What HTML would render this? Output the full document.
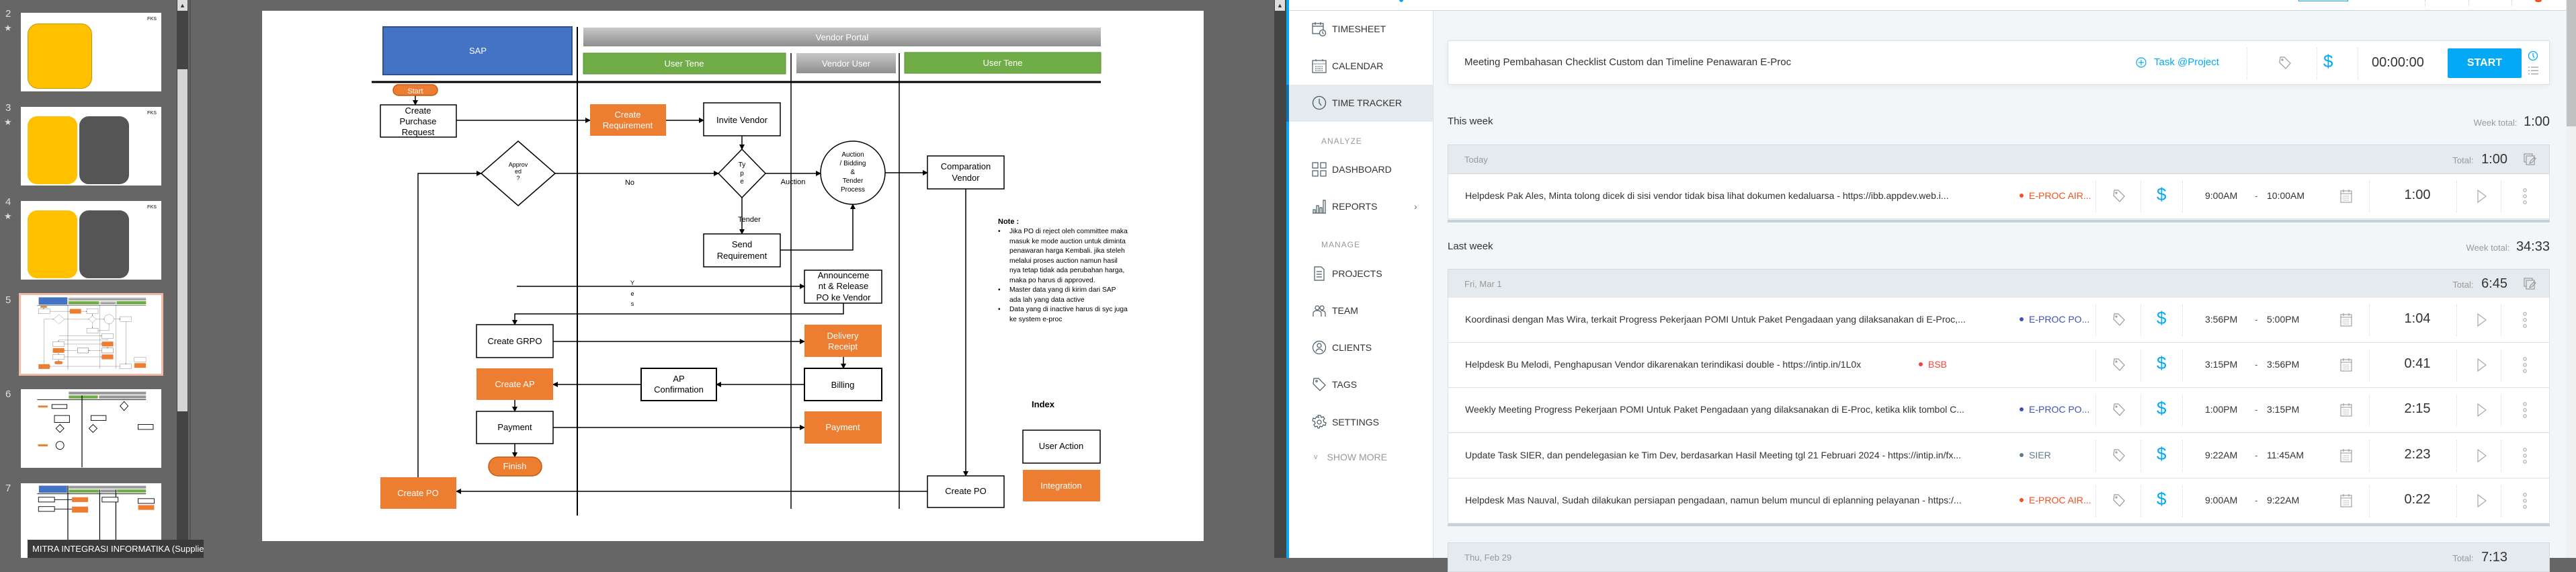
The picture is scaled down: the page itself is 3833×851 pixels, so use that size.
<!DOCTYPE html>
<html><head><meta charset="utf-8">
<style>
*{margin:0;padding:0;box-sizing:border-box}
body{width:3833px;height:830px;position:relative;overflow:hidden;background:#666;font-family:"Liberation Sans",sans-serif}
.a{position:absolute}
.thumb{position:absolute;left:31px;width:209px;background:#fff}
.num{position:absolute;left:8px;color:#ddd;font-size:15px}
.star{position:absolute;left:6px;color:#ddd;font-size:13px}
.side{position:absolute;left:1952px;font-size:14px;color:#333;display:flex;align-items:center}
.side svg{margin-right:8px}
.sec{position:absolute;left:1966px;font-size:12px;color:#999;letter-spacing:1px}
.card{position:absolute;left:2154px;width:1640px;background:#fff;border:1px solid #dbe2e7}
.hdr{position:absolute;left:2154px;width:1640px;height:44px;background:#e4eaee;border:1px solid #d3dbe0}
.hdr .d{position:absolute;left:24px;top:14px;font-size:13px;color:#999}
.hdr .t{position:absolute;right:62px;top:10px;font-size:13px;color:#999}
.hdr .t b{font-weight:normal;font-size:20px;color:#333;margin-left:8px}
.row{position:absolute;left:2154px;width:1640px;height:67px;background:#fff;border-left:1px solid #dbe2e7;border-right:1px solid #dbe2e7;border-bottom:1px solid #dbe2e7}
.row .desc{position:absolute;left:25px;top:24px;font-size:14px;color:#333;white-space:nowrap}
.row .proj{position:absolute;top:24px;font-size:14px;white-space:nowrap}
.row .proj:before{content:"";display:inline-block;width:6px;height:6px;border-radius:3px;background:currentColor;margin-right:8px;vertical-align:2px}
.dv{position:absolute;top:10px;height:47px;border-left:1px dotted #cfd8dc}
.row .tm{position:absolute;top:24px;font-size:14px;color:#333}
.row .dur{position:absolute;left:1412px;width:60px;text-align:center;top:20px;font-size:20px;color:#333}
.buck{position:absolute;left:2154px;width:1640px;height:4px;background:#c6d2d9}
</style></head><body>

<!-- left panel -->
<div class="a" style="left:0;top:0;width:262px;height:830px;background:#666"></div>
<div class="a" style="left:263px;top:0;width:17px;height:830px;background:#444"></div>
<div class="a" style="left:264px;top:0;width:15px;height:16px;background:#ddd;color:#333;font-size:9px;text-align:center;line-height:16px">▲</div>
<div class="a" style="left:264px;top:103px;width:15px;height:509px;background:#d4d4d4"></div>
<div class="a" style="left:282px;top:0;width:2px;height:830px;background:#555"></div>

<div class="num" style="top:12px">2</div><div class="star" style="top:34px">★</div>
<div class="thumb" style="top:19px;height:117px">
 <div class="a" style="left:10px;top:16px;width:96px;height:97px;background:#ffc000;border:1px solid #c89700;border-radius:16px"></div>
 <div class="a" style="left:188px;top:6px;font-size:7px;font-weight:bold;color:#555">FKS</div>
</div>
<div class="num" style="top:152px">3</div><div class="star" style="top:174px">★</div>
<div class="thumb" style="top:159px;height:117px">
 <div class="a" style="left:10px;top:14px;width:74px;height:101px;background:#ffc000;border-radius:14px"></div>
 <div class="a" style="left:87px;top:14px;width:74px;height:101px;background:#555;border-radius:14px"></div>
 <div class="a" style="left:188px;top:6px;font-size:7px;font-weight:bold;color:#555">FKS</div>
</div>
<div class="num" style="top:292px">4</div><div class="star" style="top:314px">★</div>
<div class="thumb" style="top:299px;height:117px">
 <div class="a" style="left:10px;top:14px;width:74px;height:101px;background:#ffc000;border-radius:14px"></div>
 <div class="a" style="left:87px;top:14px;width:74px;height:101px;background:#555;border-radius:14px"></div>
 <div class="a" style="left:188px;top:6px;font-size:7px;font-weight:bold;color:#555">FKS</div>
</div>
<div class="num" style="top:438px">5</div>
<div class="a" style="left:28px;top:436px;width:215px;height:123px;background:#f4b9a6"></div>
<div class="thumb" style="top:439px;height:117px"></div>
<div class="num" style="top:578px">6</div>
<div class="thumb" style="top:579px;height:117px"></div>
<div class="num" style="top:718px">7</div>
<div class="thumb" style="top:719px;height:111px"></div>

<!-- slide -->
<div class="a" style="left:390px;top:16px;width:1401px;height:789px;background:#fff"></div>
<div class="a" style="left:1896px;top:0;width:18px;height:830px;background:#444"></div>
<div class="a" style="left:1897px;top:0;width:15px;height:16px;background:#ddd;color:#333;font-size:9px;text-align:center;line-height:16px">▲</div>

<svg class="a" style="left:0;top:0" width="1900" height="830" viewBox="0 0 1900 830">
<defs>
<marker id="ar" markerWidth="8" markerHeight="8" refX="7" refY="4" orient="auto" markerUnits="userSpaceOnUse"><path d="M0,0 L8,4 L0,8z" fill="#000"/></marker>
<linearGradient id="gg" x1="0" y1="0" x2="0" y2="1"><stop offset="0" stop-color="#c8c8c8"/><stop offset="1" stop-color="#8e8e8e"/></linearGradient>
</defs>
<g id="shp">
<rect x="570" y="40" width="281" height="71" fill="#4472c4" stroke="#2f528f" stroke-width="2"/>
<rect x="868" y="41" width="770" height="28" fill="url(#gg)"/>
<rect x="868" y="79" width="301" height="31" fill="#70ad47" stroke="#5a8f38"/>
<rect x="1185" y="79" width="148" height="30" fill="url(#gg)"/>
<rect x="1346" y="78" width="292" height="31" fill="#70ad47" stroke="#5a8f38"/>
<line x1="553" y1="122" x2="1638" y2="122" stroke="#000" stroke-width="3"/>
<line x1="859" y1="40" x2="859" y2="767" stroke="#000" stroke-width="2"/>
<line x1="1177" y1="79" x2="1177" y2="757" stroke="#000" stroke-width="1.5"/>
<line x1="1338" y1="79" x2="1338" y2="757" stroke="#000" stroke-width="1.5"/>
<g fill="none" stroke="#000" stroke-width="1.5">
<path d="M618,142 V156" marker-end="url(#ar)"/>
<path d="M679,179 H878" marker-end="url(#ar)"/>
<path d="M991,179 H1047" marker-end="url(#ar)"/>
<path d="M1104,202 V222" marker-end="url(#ar)"/>
<path d="M622,710 V258 H716" marker-end="url(#ar)"/>
<path d="M826,258 H1069" marker-end="url(#ar)"/>
<path d="M1139,258 H1221" marker-end="url(#ar)"/>
<path d="M1317,257 H1380" marker-end="url(#ar)"/>
<path d="M1104,294 V348" marker-end="url(#ar)"/>
<path d="M1161,372 H1269 V304" marker-end="url(#ar)"/>
<path d="M769,426 H1197" marker-end="url(#ar)"/>
<path d="M1255,451 V467 H766 V483" marker-end="url(#ar)"/>
<path d="M823,508 H1197" marker-end="url(#ar)"/>
<path d="M1255,531 V548" marker-end="url(#ar)"/>
<path d="M1197,572 H1066" marker-end="url(#ar)"/>
<path d="M954,572 H823" marker-end="url(#ar)"/>
<path d="M766,595 V612" marker-end="url(#ar)"/>
<path d="M823,636 H1197" marker-end="url(#ar)"/>
<path d="M766,660 V680" marker-end="url(#ar)"/>
<path d="M1437,281 V708" marker-end="url(#ar)"/>
<path d="M1380,731 H679" marker-end="url(#ar)"/>
</g>
<g stroke="#000" stroke-width="1.5" fill="#fff">
<rect x="585" y="126" width="66" height="16" rx="8" fill="#ed7d31" stroke="#c55a11"/>
<rect x="566" y="156" width="113" height="48"/>
<rect x="878" y="155" width="113" height="47" fill="#ed7d31" stroke="none"/>
<rect x="1047" y="153" width="114" height="49"/>
<polygon points="771,210 826,258 771,306 716,258"/>
<polygon points="1104,222 1139,258 1104,294 1069,258"/>
<ellipse cx="1269" cy="257" rx="48" ry="47"/>
<rect x="1380" y="232" width="114" height="49"/>
<rect x="1047" y="348" width="114" height="49"/>
<rect x="1197" y="402" width="115" height="49"/>
<rect x="709" y="483" width="114" height="49"/>
<rect x="1197" y="483" width="115" height="48" fill="#ed7d31" stroke="none"/>
<rect x="709" y="548" width="114" height="47" fill="#ed7d31" stroke="none"/>
<rect x="954" y="548" width="112" height="48" stroke-width="2"/>
<rect x="1197" y="548" width="115" height="48" stroke-width="2"/>
<rect x="709" y="612" width="114" height="48"/>
<rect x="1197" y="612" width="115" height="48" fill="#ed7d31" stroke="none"/>
<rect x="727" y="680" width="79" height="28" rx="14" fill="#ed7d31" stroke="#c55a11"/>
<rect x="566" y="710" width="113" height="47" fill="#ed7d31" stroke="none"/>
<rect x="1380" y="708" width="114" height="47"/>
<rect x="1522" y="640" width="115" height="49"/>
<rect x="1522" y="699" width="115" height="47" fill="#ed7d31" stroke="none"/>
</g>
</g>
<g font-family="'Liberation Sans Narrow','Liberation Sans',sans-serif" font-size="13" text-anchor="middle" fill="#000">
<g fill="#fff"><text x="711" y="80">SAP</text><text x="1253" y="60">Vendor Portal</text><text x="1018" y="99">User Tene</text><text x="1259" y="99">Vendor User</text><text x="1492" y="98">User Tene</text>
<text x="618" y="139" font-size="11">Start</text><text x="934" y="175">Create</text><text x="934" y="191">Requirement</text>
<text x="1254" y="504">Delivery</text><text x="1254" y="520">Receipt</text><text x="766" y="576">Create AP</text><text x="1254" y="640">Payment</text>
<text x="766" y="698">Finish</text><text x="622" y="738">Create PO</text><text x="1579" y="727">Integration</text></g>
<text x="622" y="169">Create</text><text x="622" y="185">Purchase</text><text x="622" y="201">Request</text>
<text x="1104" y="183">Invite Vendor</text>
<text x="771" y="248" font-size="9">Approv</text><text x="771" y="258" font-size="9">ed</text><text x="771" y="268" font-size="9">?</text>
<text x="1104" y="248" font-size="10">Ty</text><text x="1104" y="261" font-size="10">p</text><text x="1104" y="273" font-size="10">e</text>
<text x="1269" y="233" font-size="10">Auction</text><text x="1269" y="246" font-size="10">/ Bidding</text><text x="1269" y="259" font-size="10">&amp;</text><text x="1269" y="272" font-size="10">Tender</text><text x="1269" y="285" font-size="10">Process</text>
<text x="1437" y="252">Comparation</text><text x="1437" y="269">Vendor</text>
<text x="937" y="275" font-size="11">No</text><text x="1180" y="274" font-size="11">Auction</text><text x="1115" y="330" font-size="11">Tender</text>
<text x="1104" y="368">Send</text><text x="1104" y="385">Requirement</text>
<text x="1255" y="414">Announceme</text><text x="1255" y="430">nt &amp; Release</text><text x="1255" y="447">PO ke Vendor</text>
<text x="941" y="424" font-size="9">Y</text><text x="941" y="440" font-size="9">e</text><text x="941" y="455" font-size="9">s</text>
<text x="766" y="512">Create GRPO</text>
<text x="1010" y="568">AP</text><text x="1010" y="584">Confirmation</text>
<text x="1254" y="577">Billing</text><text x="766" y="640">Payment</text><text x="1437" y="735">Create PO</text>
<text x="1579" y="668">User Action</text>
<text x="1552" y="606" font-weight="bold">Index</text>
</g>
<g font-family="'Liberation Sans',sans-serif" font-size="10.3" fill="#000">
<text x="1485" y="333" font-weight="bold" font-size="11">Note :</text>
<text x="1485" y="347">•</text><text x="1502" y="347">Jika PO di reject oleh committee maka</text>
<text x="1502" y="362">masuk ke mode auction untuk diminta</text>
<text x="1502" y="376">penawaran harga Kembali. jika steleh</text>
<text x="1502" y="391">melalui proses auction namun hasil</text>
<text x="1502" y="405">nya tetap tidak ada perubahan harga,</text>
<text x="1502" y="420">maka po harus di approved.</text>
<text x="1485" y="434">•</text><text x="1502" y="434">Master data yang di kirim dari SAP</text>
<text x="1502" y="449">ada lah yang data active</text>
<text x="1485" y="463">•</text><text x="1502" y="463">Data yang di inactive harus di syc juga</text>
<text x="1502" y="478">ke system e-proc</text>
</g>
<!-- thumbnails -->
<use href="#shp" transform="translate(31,439) scale(0.1492,0.1483) translate(-390,-16)"/>
<g transform="translate(31,719) scale(0.1492,0.1483) translate(-390,-16)">
<rect x="570" y="40" width="281" height="71" fill="#4472c4"/><rect x="868" y="41" width="770" height="28" fill="#999"/>
<rect x="868" y="79" width="301" height="31" fill="#70ad47"/><rect x="1185" y="79" width="148" height="30" fill="#999"/><rect x="1346" y="78" width="292" height="31" fill="#70ad47"/>
<line x1="553" y1="122" x2="1638" y2="122" stroke="#000" stroke-width="6"/>
<g stroke="#000" stroke-width="8"><line x1="859" y1="40" x2="859" y2="800"/><line x1="1177" y1="79" x2="1177" y2="800"/><line x1="1338" y1="79" x2="1338" y2="800"/></g>
<g fill="#fff" stroke="#000" stroke-width="6"><rect x="566" y="156" width="160" height="48"/><rect x="566" y="250" width="160" height="48"/><rect x="1200" y="156" width="160" height="48"/><rect x="1560" y="170" width="160" height="48"/></g>
<rect x="900" y="156" width="160" height="48" fill="#ed7d31"/><rect x="900" y="250" width="160" height="60" fill="#ed7d31"/><rect x="1560" y="235" width="160" height="48" fill="#ed7d31"/>
<g stroke="#000" stroke-width="6"><line x1="726" y1="180" x2="900" y2="180"/><line x1="726" y1="274" x2="900" y2="274"/></g>
</g>
<g transform="translate(31,579) scale(0.1492,0.1483) translate(-390,-16)">
<rect x="868" y="41" width="770" height="28" fill="#999"/><rect x="868" y="79" width="290" height="31" fill="#70ad47"/><rect x="1170" y="79" width="468" height="31" fill="#999"/>
<line x1="553" y1="122" x2="1638" y2="122" stroke="#000" stroke-width="6"/>
<line x1="1000" y1="79" x2="1000" y2="800" stroke="#000" stroke-width="8"/>
<g fill="#fff" stroke="#000" stroke-width="6"><rect x="700" y="170" width="150" height="40"/><rect x="725" y="280" width="150" height="70"/><rect x="1090" y="280" width="150" height="50"/><rect x="1560" y="370" width="150" height="50"/>
<polygon points="1420,140 1460,185 1420,230 1380,185"/><polygon points="780,370 820,410 780,450 740,410"/><polygon points="1110,370 1150,410 1110,450 1070,410"/><ellipse cx="780" cy="580" rx="40" ry="40"/></g>
<rect x="560" y="180" width="100" height="20" rx="10" fill="#ed7d31"/><rect x="560" y="570" width="100" height="20" rx="10" fill="#ed7d31"/>
</g>
</svg>
<div class="a" style="left:41px;top:803px;width:262px;height:27px;background:#3a3a3a;color:#fff;font-size:13px;line-height:27px;padding-left:7px;white-space:nowrap;overflow:hidden">MITRA INTEGRASI INFORMATIKA (Supplier)</div>

<!-- right app -->
<div class="a" style="left:1914px;top:0;width:1904px;height:830px;background:#f2f6f8"></div>
<div class="a" style="left:1914px;top:0;width:1904px;height:16px;background:#fff;border-bottom:1px solid #c8d4dc"></div>
<div class="a" style="left:2082px;top:0;width:6px;height:3px;background:#03a9f4;border-radius:0 0 3px 3px"></div>
<div class="a" style="left:3420px;top:0;width:74px;height:2px;border:1px solid #03a9f4;border-top:none"></div>
<div class="a" style="left:3608px;top:0;height:10px;border-left:1px dotted #ccc"></div>
<div class="a" style="left:3673px;top:0;height:10px;border-left:1px dotted #ccc"></div>
<div class="a" style="left:3737px;top:0;height:10px;border-left:1px dotted #ccc"></div>
<div class="a" style="left:3772px;top:0;width:10px;height:3px;background:#f4511e;border-radius:0 0 5px 5px"></div>
<div class="a" style="left:1914px;top:0;width:4px;height:830px;background:#03a9f4"></div>
<div class="a" style="left:1918px;top:16px;width:215px;height:814px;background:#fff;border-right:1px solid #dbe2e7"></div>
<div class="a" style="left:1918px;top:126px;width:214px;height:55px;background:#e4eaee"></div>
<div class="a" style="left:1914px;top:126px;width:4px;height:55px;background:#0b75b5"></div>
<div class="a" style="left:3818px;top:0;width:15px;height:830px;background:#f0f0f0"></div>
<div class="a" style="left:3819px;top:0;width:14px;height:188px;background:#c1c1c1"></div>

<div class="side" style="top:32px"><svg width="22" height="22" viewBox="0 0 22 22" fill="none" stroke="#455a64" stroke-width="1.2"><rect x="1" y="3" width="16" height="15"/><path d="M1 7h16M5 1v4M13 1v4"/><circle cx="16" cy="17" r="4.5" fill="#fff"/><path d="M16 14.5v2.5l1.5 1.5"/></svg>TIMESHEET</div>
<div class="side" style="top:87px"><svg width="22" height="22" viewBox="0 0 22 22" fill="none" stroke="#455a64" stroke-width="1.2"><rect x="1" y="3" width="20" height="18"/><path d="M1 8h20M6 1v4M16 1v4M5 12h12M5 15h12M5 18h12" stroke-dasharray="1 1"/></svg>CALENDAR</div>
<div class="side" style="top:142px"><svg width="22" height="22" viewBox="0 0 22 22" fill="none" stroke="#455a64" stroke-width="1.3"><circle cx="11" cy="11" r="9.5"/><path d="M11 5v6l3 4"/></svg>TIME TRACKER</div>
<div class="sec" style="top:203px">ANALYZE</div>
<div class="side" style="top:241px"><svg width="22" height="22" viewBox="0 0 22 22" fill="none" stroke="#455a64" stroke-width="1.2"><rect x="1" y="1" width="8" height="8"/><rect x="13" y="1" width="8" height="8"/><rect x="1" y="13" width="8" height="8"/><rect x="13" y="13" width="8" height="8"/></svg>DASHBOARD</div>
<div class="side" style="top:296px"><svg width="22" height="22" viewBox="0 0 22 22" fill="none" stroke="#455a64" stroke-width="1.2"><path d="M2 21v-5h3v5M7 21V10h3v11M12 21V13h3v8M17 21V2h3v19M1 21h20"/></svg>REPORTS<span style="position:absolute;left:152px;color:#666">›</span></div>
<div class="sec" style="top:357px">MANAGE</div>
<div class="side" style="top:396px"><svg width="22" height="22" viewBox="0 0 22 22" fill="none" stroke="#455a64" stroke-width="1.2"><path d="M4 1h10l4 4v16H4z M7 8h8M7 12h8M7 16h8"/></svg>PROJECTS</div>
<div class="side" style="top:451px"><svg width="22" height="22" viewBox="0 0 22 22" fill="none" stroke="#455a64" stroke-width="1.2"><circle cx="8" cy="7" r="3"/><circle cx="15" cy="7" r="3"/><path d="M2 20v-5c0-2 2-4 6-4s6 2 6 4v5M14 11c4 0 6 2 6 4v5"/></svg>TEAM</div>
<div class="side" style="top:506px"><svg width="22" height="22" viewBox="0 0 22 22" fill="none" stroke="#455a64" stroke-width="1.2"><circle cx="11" cy="11" r="9.5"/><circle cx="11" cy="8" r="3"/><path d="M6 17c1-3 3-4 5-4s4 1 5 4"/></svg>CLIENTS</div>
<div class="side" style="top:561px"><svg width="22" height="22" viewBox="0 0 22 22" fill="none" stroke="#455a64" stroke-width="1.2"><path d="M3 2h7l10 10-8 8L2 10z"/><circle cx="7" cy="6" r="1.2"/></svg>TAGS</div>
<div class="side" style="top:617px"><svg width="22" height="22" viewBox="0 0 22 22" fill="none" stroke="#455a64" stroke-width="1.2"><circle cx="11" cy="11" r="3"/><path d="M9 1h4l1 3 3-1 2 3-2 2 1 3 3 1v0l-1 4-3-1-2 3-3-1-1 3H9l-1-3-3 1-2-3 2-2-1-3-3-1 1-4 3 1 2-3 3 1z"/></svg>SETTINGS</div>
<div class="side" style="top:672px;color:#999;left:1955px"><span style="font-size:11px;margin-right:14px">v</span>SHOW MORE</div>

<!-- timer card -->
<div class="card" style="top:60px;height:66px;box-shadow:0 2px 8px rgba(0,0,0,.06)">
 <div class="a" style="left:24px;top:23px;font-size:15px;color:#333">Meeting Pembahasan Checklist Custom dan Timeline Penawaran E-Proc</div>
 <div class="a" style="left:1022px;top:22px;font-size:15px;color:#03a9f4;display:flex;align-items:center"><svg width="18" height="18" viewBox="0 0 18 18" fill="none" stroke="#03a9f4" stroke-width="1.2"><circle cx="9" cy="10" r="7"/><path d="M9 6v8M5 10h8"/></svg><span style="margin-left:10px">Task @Project</span></div>
 <div class="dv" style="left:1188px"></div>
 <svg class="a" style="left:1235px;top:22px" width="20" height="22" viewBox="0 0 20 22" fill="none" stroke="#999" stroke-width="1.2"><path d="M3 2h6l9 9-7 8L2 10z"/><circle cx="6" cy="6" r="1"/></svg>
 <div class="dv" style="left:1292px"></div>
 <div class="a" style="left:1302px;top:15px;font-size:26px;color:#03a9f4">$</div>
 <div class="dv" style="left:1353px"></div>
 <div class="a" style="left:1374px;top:21px;font-size:20px;color:#333">00:00:00</div>
 <div class="a" style="left:1487px;top:11px;width:110px;height:44px;background:#03a9f4;border-radius:2px;color:#fff;font-size:16px;font-weight:bold;text-align:center;line-height:44px">START</div>
 <svg class="a" style="left:1606px;top:14px" width="16" height="16" viewBox="0 0 16 16" fill="none" stroke="#03a9f4" stroke-width="1.3"><circle cx="8" cy="8" r="6.5"/><path d="M8 4v4l2 3"/></svg>
 <svg class="a" style="left:1607px;top:38px" width="15" height="12" viewBox="0 0 15 12" stroke="#999" stroke-width="1.2"><path d="M0 1h2M4 1h11M0 6h2M4 6h11M0 11h2M4 11h11"/></svg>
</div>

<div class="a" style="left:2154px;top:172px;font-size:15px;color:#333">This week</div>
<div class="a" style="left:3620px;top:170px;width:174px;text-align:right;font-size:13px;color:#999">Week total: <span style="font-size:20px;color:#333;margin-left:6px">1:00</span></div>
<div class="hdr" style="top:215px"><div class="d">Today</div><div class="t">Total: <b>1:00</b></div><svg class="a" style="right:18px;top:12px" width="20" height="20" viewBox="0 0 20 20" fill="none" stroke="#999" stroke-width="1.2"><rect x="1" y="1" width="12" height="12"/><rect x="4" y="4" width="12" height="13" fill="#e4eaee"/><path d="M9 15l1-3 6-6 2 2-6 6z"/></svg></div>

<div class="a" style="left:2154px;top:358px;font-size:15px;color:#333">Last week</div>
<div class="a" style="left:3600px;top:356px;width:194px;text-align:right;font-size:13px;color:#999">Week total: <span style="font-size:20px;color:#333;margin-left:6px">34:33</span></div>
<div class="hdr" style="top:400px"><div class="d">Fri, Mar 1</div><div class="t">Total: <b>6:45</b></div><svg class="a" style="right:18px;top:12px" width="20" height="20" viewBox="0 0 20 20" fill="none" stroke="#999" stroke-width="1.2"><rect x="1" y="1" width="12" height="12"/><rect x="4" y="4" width="12" height="13" fill="#e4eaee"/><path d="M9 15l1-3 6-6 2 2-6 6z"/></svg></div>
<div class="hdr" style="top:807px"><div class="d">Thu, Feb 29</div><div class="t">Total: <b>7:13</b></div></div>

<div id="rows"></div>
<script>
var rows=[
[259,"Helpdesk Pak Ales, Minta tolong dicek di sisi vendor tidak bisa lihat dokumen kedaluarsa - https://ibb.appdev.web.i...","E-PROC AIR...","#f4511e",850,"9:00AM","10:00AM","1:00"],
[443,"Koordinasi dengan Mas Wira, terkait Progress Pekerjaan POMI Untuk Paket Pengadaan yang dilaksanakan di E-Proc,...","E-PROC PO...","#3f51b5",850,"3:56PM","5:00PM","1:04"],
[510,"Helpdesk Bu Melodi, Penghapusan Vendor dikarenakan terindikasi double - https://intip.in/1L0x","BSB","#f44336",700,"3:15PM","3:56PM","0:41"],
[577,"Weekly Meeting Progress Pekerjaan POMI Untuk Paket Pengadaan yang dilaksanakan di E-Proc, ketika klik tombol C...","E-PROC PO...","#3f51b5",850,"1:00PM","3:15PM","2:15"],
[645,"Update Task SIER, dan pendelegasian ke Tim Dev, berdasarkan Hasil Meeting tgl 21 Februari 2024 - https://intip.in/fx...","SIER","#607d8b",850,"9:22AM","11:45AM","2:23"],
[712,"Helpdesk Mas Nauval, Sudah dilakukan persiapan pengadaan, namun belum muncul di eplanning pelayanan - https:/...","E-PROC AIR...","#f4511e",850,"9:00AM","9:22AM","0:22"]];
var h="";
rows.forEach(function(r){
h+='<div class="row" style="top:'+r[0]+'px"><div class="desc">'+r[1]+'</div>'+
'<div class="proj" style="left:'+r[4]+'px;color:'+r[3]+'">'+r[2]+'</div>'+
'<div class="dv" style="left:963px"></div>'+
'<svg class="a" style="left:988px;top:22px" width="20" height="22" viewBox="0 0 20 22" fill="none" stroke="#999" stroke-width="1.2"><path d="M3 2h6l9 9-7 8L2 10z"/><circle cx="6" cy="6" r="1"/></svg>'+
'<div class="dv" style="left:1030px"></div>'+
'<div class="a" style="left:1054px;top:15px;font-size:26px;color:#03a9f4">$</div>'+
'<div class="dv" style="left:1092px"></div>'+
'<div class="tm" style="left:1126px">'+r[5]+'</div><div class="tm" style="left:1200px;color:#666">-</div><div class="tm" style="left:1218px">'+r[6]+'</div>'+
'<svg class="a" style="left:1327px;top:22px" width="18" height="22" viewBox="0 0 18 22" fill="none" stroke="#999" stroke-width="1.1"><rect x="1" y="3" width="16" height="17"/><path d="M1 7h16M5 1v4M13 1v4"/><path d="M4 11h10M4 14h10M4 17h10" stroke-dasharray="1 1"/></svg>'+
'<div class="dv" style="left:1370px"></div>'+
'<div class="dur">'+r[7]+'</div>'+
'<div class="dv" style="left:1500px"></div>'+
'<svg class="a" style="left:1530px;top:22px" width="16" height="22" viewBox="0 0 16 22" fill="none" stroke="#aaa" stroke-width="1.2"><path d="M2 2l12 9-12 9z"/></svg>'+
'<div class="dv" style="left:1566px"></div>'+
'<svg class="a" style="left:1598px;top:20px" width="8" height="26" viewBox="0 0 8 26" fill="none" stroke="#999" stroke-width="1"><circle cx="4" cy="4" r="2.2"/><circle cx="4" cy="13" r="2.2"/><circle cx="4" cy="22" r="2.2"/></svg></div>';
});
h+='<div class="buck" style="top:327px"></div><div class="buck" style="top:779px"></div>';
document.getElementById("rows").innerHTML=h;
</script>
</body></html>
